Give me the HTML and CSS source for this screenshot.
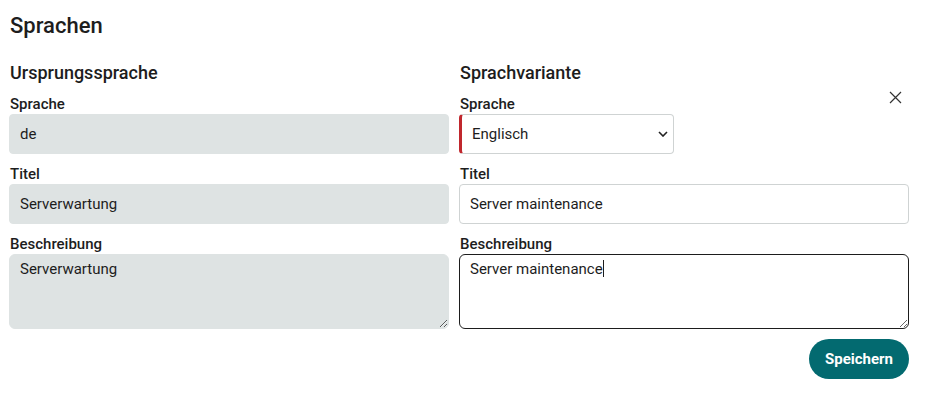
FILE: index.html
```html
<!DOCTYPE html>
<html lang="de">

<head>
     <meta charset="UTF-8">
     <meta name="viewport" content="width=device-width, initial-scale=1.0">
     <title>Sprachen</title>
     <link rel="stylesheet" href="styles.css">
</head>

<body>
     <div class="page">
          <h1>Sprachen</h1>
          <div class="columns">
               <div class="col">
                    <h2>Ursprungssprache</h2>
                    <label class="field">
                         <span class="label">Sprache</span>
                         <input class="input readonly" type="text" value="de" readonly>
                    </label>
                    <label class="field">
                         <span class="label">Titel</span>
                         <input class="input readonly" type="text" value="Serverwartung" readonly>
                    </label>
                    <label class="field">
                         <span class="label">Beschreibung</span>
                         <textarea class="input area readonly" readonly>Serverwartung</textarea>
                    </label>
               </div>
               <div class="col variant">
                    <h2>Sprachvariante</h2>
                    <button class="close" type="button" aria-label="Schließen">
                         <svg width="13" height="13" viewBox="0 0 13 13">
                              <path d="M1 1 L12 12 M12 1 L1 12" stroke="#333" stroke-width="1.2" fill="none" />
                         </svg>
                    </button>
                    <label class="field">
                         <span class="label">Sprache</span>
                         <span class="select-wrap">
                              <select class="input select">
                                   <option>Englisch</option>
                              </select>
                              <svg class="chevron" width="10" height="6" viewBox="0 0 10 6">
                                   <path d="M1 1 L5 5 L9 1" stroke="#222" stroke-width="1.6" fill="none" />
                              </svg>
                         </span>
                    </label>
                    <label class="field">
                         <span class="label">Titel</span>
                         <input class="input" type="text" value="Server maintenance">
                    </label>
                    <label class="field">
                         <span class="label">Beschreibung</span>
                         <span class="area-wrap">
                              <textarea class="input area focused">Server maintenance</textarea>
                              <span class="caret"></span>
                         </span>
                    </label>
                    <div class="actions">
                         <button class="save" type="button">Speichern</button>
                    </div>
               </div>
          </div>
     </div>
</body>

</html>
```

FILE: styles.css
```css
/* Base styles */
body {
     margin: 0;
     background: #ffffff;
     color: #1d1d1d;
     font-family: Roboto, "Noto Sans", sans-serif;
}

.page {
     padding: 13px 22px 0 9px;
}

h1 {
     margin: 0 0 23px 1px;
     font-size: 22px;
     line-height: 26px;
     font-weight: 500;
}

.columns {
     display: grid;
     grid-template-columns: 440px 450px;
     column-gap: 10px;
}

.col {
     display: flex;
     flex-direction: column;
}

.variant {
     position: relative;
}

h2 {
     margin: 0 0 11px 1px;
     font-size: 18px;
     line-height: 22px;
     font-weight: 500;
}

/* Form fields */
.field {
     display: flex;
     flex-direction: column;
     margin-bottom: 11px;
}

.label {
     margin-left: 1px;
     margin-bottom: 1px;
     font-size: 15px;
     line-height: 18px;
     font-weight: 500;
}

.input {
     box-sizing: border-box;
     height: 40px;
     width: 100%;
     padding: 0 10px;
     border: 1px solid #cfd3d3;
     border-radius: 4px;
     background: #ffffff;
     color: #1d1d1d;
     font-family: Roboto, "Noto Sans", sans-serif;
     font-size: 15px;
     outline: none;
}

.readonly {
     background: #dee3e3;
     border-color: #dee3e3;
}

.area {
     height: 75px;
     padding: 5px 10px;
     line-height: 18px;
     resize: vertical;
     border-radius: 6px;
     display: block;
}

.focused {
     border-color: #1d1d1d;
}

.area-wrap {
     position: relative;
     display: block;
}

.caret {
     position: absolute;
     left: 144px;
     top: 6px;
     width: 1px;
     height: 17px;
     background: #1d1d1d;
}

.select-wrap {
     position: relative;
     width: 215px;
}

.select {
     appearance: none;
     -webkit-appearance: none;
     border-left: 3px solid #c0272d;
     padding-left: 10px;
}

.chevron {
     position: absolute;
     right: 6px;
     top: 17px;
     pointer-events: none;
}

.close {
     position: absolute;
     top: 29px;
     right: 7px;
     padding: 0;
     border: none;
     background: none;
     cursor: pointer;
     line-height: 0;
}

.actions {
     display: flex;
     justify-content: flex-end;
     margin-top: -1px;
}

.save {
     height: 40px;
     padding: 0 16px;
     border: none;
     border-radius: 20px;
     background: #036a70;
     color: #ffffff;
     font-family: Roboto, "Noto Sans", sans-serif;
     font-size: 15px;
     font-weight: 700;
     cursor: pointer;
}
```
